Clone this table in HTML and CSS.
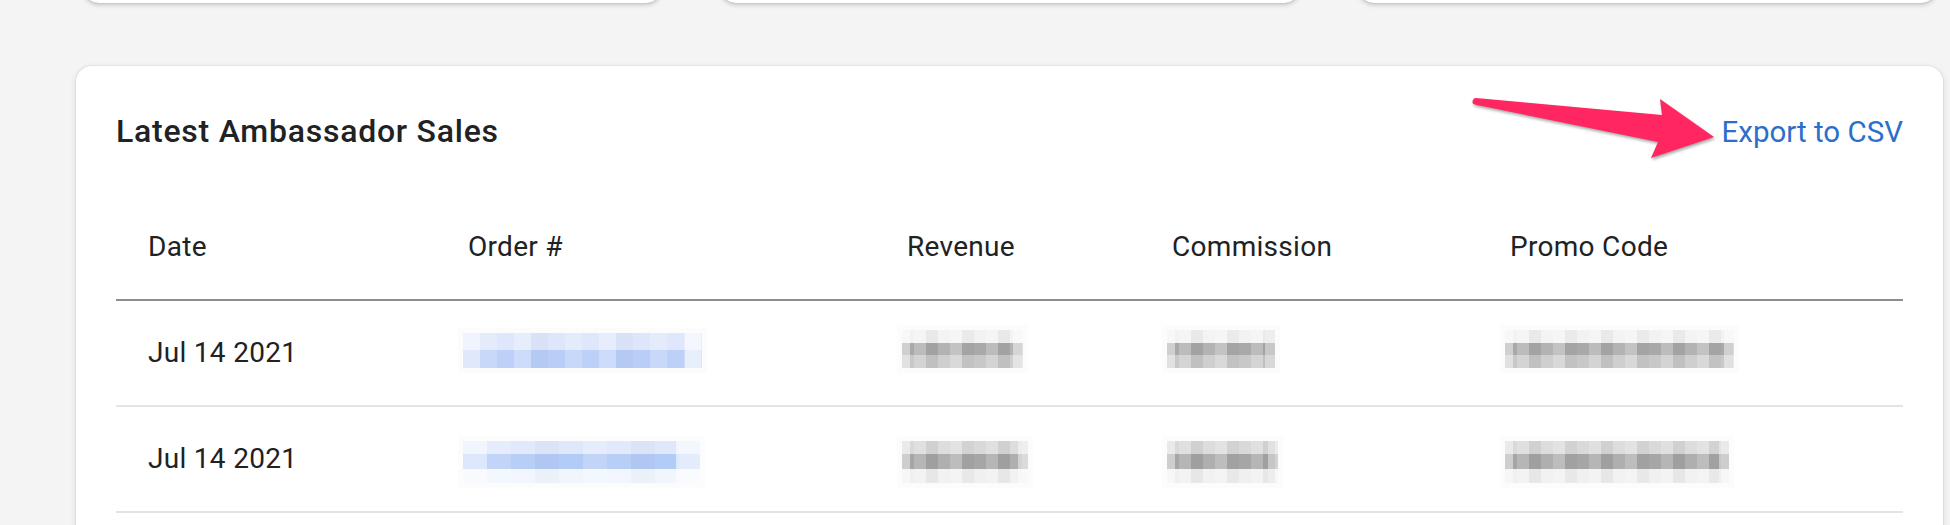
FILE: index.html
```html
<!DOCTYPE html>
<html lang="en">
<head>
<meta charset="utf-8">
<title>Latest Ambassador Sales</title>
<link rel="stylesheet" href="styles.css">
</head>
<body>
<div class="page">
  <div class="stats">
    <div class="stat"></div>
    <div class="stat"></div>
    <div class="stat"></div>
  </div>

  <section class="card">
    <svg class="arrow" viewBox="0 0 270 80" width="270" height="80" aria-hidden="true">
      <path d="M16,8 L202,25 L200,9 L254,47 L191,68 L198,52 L17,15 Q12,14.5 12.5,11.5 Q13,8 16,8 Z" fill="#ff2661"/>
    </svg>

    <div class="card-head">
      <h2 class="card-title">Latest Ambassador Sales</h2>
      <a class="export-link" href="#">Export to CSV</a>
    </div>

    <div class="table">
      <div class="row head">
        <div class="cell">Date</div>
        <div class="cell">Order #</div>
        <div class="cell">Revenue</div>
        <div class="cell">Commission</div>
        <div class="cell">Promo Code</div>
      </div>
      <div class="row r1">
        <div class="cell">Jul 14 2021</div>
        <div class="cell"><span class="mosaic blue w-order1"></span></div>
        <div class="cell"><span class="mosaic gray w-rev1"></span></div>
        <div class="cell"><span class="mosaic gray w-com1"></span></div>
        <div class="cell"><span class="mosaic gray w-promo1"></span></div>
      </div>
      <div class="row r2">
        <div class="cell">Jul 14 2021</div>
        <div class="cell"><span class="mosaic blue w-order2"></span></div>
        <div class="cell"><span class="mosaic gray w-rev2"></span></div>
        <div class="cell"><span class="mosaic gray w-com2"></span></div>
        <div class="cell"><span class="mosaic gray w-promo2"></span></div>
      </div>
    </div>
  </section>
</div>
</body>
</html>
```

FILE: styles.css
```css
* { box-sizing: border-box; }

html, body {
  margin: 0;
  height: 525px;
  overflow: hidden;
}

body {
  background: #f4f4f4;
  font-family: Roboto, "Liberation Sans", Arial, sans-serif;
  color: #202223;
}

.page {
  padding: 0 7px 0 76px;
}

/* top summary cards (mostly scrolled out of view) */
.stats {
  display: grid;
  grid-template-columns: repeat(3, 1fr);
  gap: 58px;
  padding: 0 6px 0 7px;
  margin-top: -37px;
}

.stat {
  height: 40px;
  background: #fff;
  border-radius: 16px;
  box-shadow: 0 0 0 1px rgba(63, 63, 68, 0.05), 0 2px 4px rgba(63, 63, 68, 0.25);
}

/* main card */
.card {
  position: relative;
  margin-top: 63px;
  background: #fff;
  border-radius: 16px;
  padding: 45px 40px 0;
  height: 600px;
  box-shadow: 0 0 0 1px rgba(63, 63, 68, 0.05), 0 2px 6px rgba(63, 63, 68, 0.15);
}

.card-head {
  display: flex;
  justify-content: space-between;
  align-items: baseline;
  margin-bottom: 43px;
}

.card-title {
  margin: 0;
  font-size: 32px;
  line-height: 40px;
  font-weight: 500;
  letter-spacing: 0.75px;
  color: #202223;
}

.export-link {
  font-size: 29.5px;
  line-height: 40px;
  color: #2c6ecb;
  text-decoration: none;
}

/* annotation arrow overlay */
.arrow {
  position: absolute;
  left: 1384px;
  top: 24px;
  overflow: visible;
  filter: drop-shadow(1px 2px 1.5px rgba(0, 0, 0, 0.35));
}

/* table */
.row {
  display: grid;
  grid-template-columns: 320px 439px 265px 338px 1fr;
  border-bottom: 2px solid #e3e4e6;
}

.row.head {
  border-bottom-color: #8a8d91;
}

.cell {
  padding: 32px;
  font-size: 28px;
  line-height: 40px;
  letter-spacing: 0.3px;
  height: 104px;
  display: flex;
  align-items: flex-start;
  white-space: nowrap;
}

/* pixelated (redacted) values */
.mosaic {
  display: block;
  flex: none;
  margin-left: -5px;
  box-shadow: 0 0 0 5px rgba(0, 0, 0, 0.012);
}

.r1 .mosaic { height: 38px; margin-top: -3px; }
.r1 .mosaic.blue { height: 35px; margin-top: 0; }
.r2 .mosaic { height: 42px; margin-top: 2px; margin-bottom: -4px; }

.mosaic.gray {
  background:
    repeating-linear-gradient(90deg,
      rgba(255, 255, 255, 0) 0 12px,
      rgba(255, 255, 255, 0.22) 12px 24px,
      rgba(0, 0, 0, 0.04) 24px 36px,
      rgba(255, 255, 255, 0.12) 36px 48px,
      rgba(255, 255, 255, 0.3) 48px 60px,
      rgba(0, 0, 0, 0.03) 60px 72px),
    linear-gradient(90deg, rgba(255, 255, 255, 0.45) 0 8px, rgba(255, 255, 255, 0) 8px calc(100% - 10px), rgba(255, 255, 255, 0.45) calc(100% - 10px)),
    linear-gradient(180deg, #f2f2f2 0 33%, #a9a9a9 33% 66%, #c8c8c8 66% 100%);
}

.r2 .mosaic.gray {
  background:
    repeating-linear-gradient(90deg,
      rgba(255, 255, 255, 0) 0 12px,
      rgba(255, 255, 255, 0.18) 12px 24px,
      rgba(0, 0, 0, 0.04) 24px 36px,
      rgba(255, 255, 255, 0.1) 36px 48px,
      rgba(255, 255, 255, 0.26) 48px 60px,
      rgba(0, 0, 0, 0.03) 60px 72px),
    linear-gradient(90deg, rgba(255, 255, 255, 0.45) 0 8px, rgba(255, 255, 255, 0) 8px calc(100% - 10px), rgba(255, 255, 255, 0.45) calc(100% - 10px)),
    linear-gradient(180deg, #d9d9d9 0 31%, #a6a6a6 31% 66%, #f0f0f0 66% 100%);
}

.mosaic.blue {
  background:
    repeating-linear-gradient(90deg,
      rgba(255, 255, 255, 0) 0 17px,
      rgba(255, 255, 255, 0.2) 17px 34px,
      rgba(255, 255, 255, 0.05) 34px 51px,
      rgba(255, 255, 255, 0.28) 51px 68px,
      rgba(0, 0, 0, 0.02) 68px 85px),
    linear-gradient(90deg, rgba(255, 255, 255, 0.55) 0 17px, rgba(255, 255, 255, 0) 17px calc(100% - 17px), rgba(255, 255, 255, 0.55) calc(100% - 17px)),
    linear-gradient(180deg, #dde6fb 0 50%, #b9cef7 50% 100%);
}

.r2 .mosaic.blue {
  background:
    repeating-linear-gradient(90deg,
      rgba(255, 255, 255, 0) 0 24px,
      rgba(255, 255, 255, 0.2) 24px 48px,
      rgba(255, 255, 255, 0.06) 48px 72px,
      rgba(0, 0, 0, 0.02) 72px 96px),
    linear-gradient(90deg, rgba(255, 255, 255, 0.55) 0 24px, rgba(255, 255, 255, 0) 24px calc(100% - 24px), rgba(255, 255, 255, 0.55) calc(100% - 24px)),
    linear-gradient(180deg, #dfe8fb 0 31%, #b3cbf7 31% 66%, #f1f5fe 66% 100%);
}

.w-order1 { width: 239px; }
.w-rev1 { width: 121px; }
.w-com1 { width: 108px; }
.w-promo1 { width: 229px; }
.w-order2 { width: 237px; }
.w-rev2 { width: 126px; }
.w-com2 { width: 111px; }
.w-promo2 { width: 224px; }
```
